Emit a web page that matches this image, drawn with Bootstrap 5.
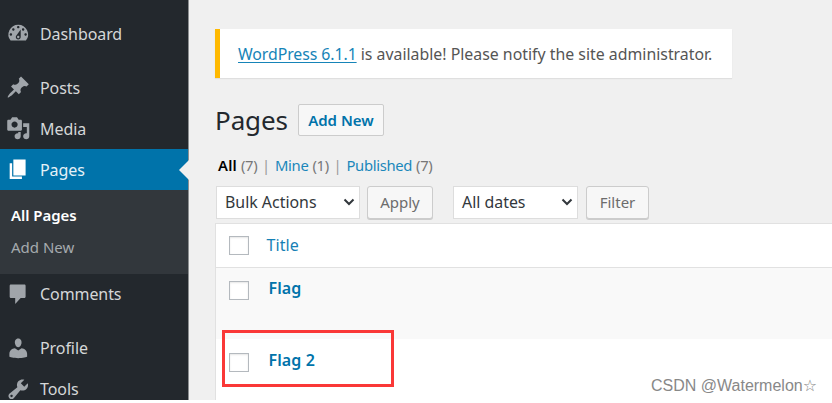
<!DOCTYPE html>
<html lang="en">
<head>
<meta charset="utf-8">
<meta name="viewport" content="width=device-width, initial-scale=1">
<title>Pages</title>
<link href="https://cdn.jsdelivr.net/npm/bootstrap@5.3.0/dist/css/bootstrap.min.css" rel="stylesheet">
<style>
body{font-family:"Noto Sans","Open Sans",sans-serif;font-size:15px;line-height:20px;color:#555;background:#fff;overflow:hidden;white-space:nowrap}
a{color:#0073aa;text-decoration:none}
.wp-app{height:400px;background:#f0f0f0}
.side{width:189px;background:#23282d;border-right:1px solid #8c8f91;padding-top:13px}
.side-item{height:41px;padding-left:6px;gap:9.5px;color:#d5d7d8;font-size:16px;letter-spacing:-.08px}
.sub ~ .side-item span{margin-top:-1px}
.side-item span{margin-top:1px}
.side-item svg{width:24.5px;height:24.5px;fill:#a0a5aa;flex:none}
.gap-top{margin-top:13px}
.side-item.current{background:#0073aa;color:#e5f1f7}
.side-item.current svg{fill:#fff}
.side-item.current::after{content:"";position:absolute;right:-1px;top:11px;border:10px solid transparent;border-left:0;border-right-color:#f0f0f0}
.sub{height:84px;background:#32373c;padding:9px 0 0 11px;color:#a5aaae}
.sub div{height:32px;line-height:32px}
.sub .on{color:#fff;font-weight:600;letter-spacing:-.05px}
.main{padding:29px 0 0 26px}
.notice-box{width:517px;height:49px;border-left:5px solid #ffb900;padding-left:18px;margin-bottom:25px;font-size:15.87px;box-shadow:0 1px 1px rgba(0,0,0,.07)}
.notice-box a{text-decoration:underline;text-underline-offset:2px;text-decoration-thickness:1.3px;color:#1684b8;letter-spacing:-.08px}
.page-title{font-size:26px;line-height:34px;font-weight:400;color:#23282d;margin:0 10px 0 0;letter-spacing:-.1px}
.add-btn{width:86px;height:32px;border:1.5px solid #ccc;border-radius:2px;background:#f7f7f7;color:#0073aa;font-weight:600;font-size:15px}
.views{margin:18px 0 11px 3px;height:20px;font-size:14.8px;letter-spacing:-.32px;gap:4px}
.views a{color:#1b87bb}
.views a.on{color:#000;font-weight:600;letter-spacing:.2px}
.views .n{color:#777}
.views i{font-style:normal;color:#999;margin:0 1px 0 .8px}
.tools-row{padding-left:1px}
.pick{height:33px;border:1px solid #ddd;background:#fff;color:#32373c;font-size:15.9px;padding:0 4px 1px 8px}
.pick svg{width:12px;height:8px;fill:none;stroke:#32373c;stroke-width:2}
.pick.w1{width:144px}.pick.w2{width:125px;margin-left:20px}
.act{height:33px;border:1px solid #ccc;border-radius:3px;background:#f7f7f7;color:#6c6c6c;font-size:15px;box-shadow:0 1px 0 #ccc}
.act.a1{width:66px;margin-left:7px}.act.a2{width:63px;margin-left:8px}
.list{margin-top:3.5px;border:1px solid #e1e1e1;border-right:0;height:200px;background:#fff}
.line{padding-left:13px}
.line.head{height:44px;border-bottom:1px solid #e1e1e1;padding-top:12px}
.line.one{height:71px;background:#f9f9f9;padding-top:13px}
.line.two{padding-top:14px}
.box{width:19.5px;height:19.5px;border:1.5px solid #b4b9be;background:#fff;box-shadow:inset 0 1px 2px rgba(0,0,0,.1);flex:none}
.line a{font-size:16px;margin-left:20px;margin-top:-2.5px;font-weight:600;letter-spacing:.1px}
.line.head a{font-weight:400;margin-left:18px;margin-top:-1px;color:#1680b5}
.redbox{position:absolute;left:222px;top:330px;width:172px;height:57px;border:3px solid #fa3837}
.stamp{position:absolute;left:651px;top:376px;font:16px/20px "Liberation Sans","DejaVu Sans",sans-serif;color:#888;text-shadow:-1px -1px 0 #fff}
</style>
</head>
<body>
<div class="wp-app d-flex position-relative overflow-hidden">
<nav class="side flex-shrink-0">
<div class="side-item d-flex align-items-center"><svg viewBox="0 0 20 20"><path fill-rule="evenodd" d="M3.76 16h12.48A7.998 7.998 0 0 0 10 3a7.998 7.998 0 0 0-6.24 13zM10 4c.55 0 1 .45 1 1s-.45 1-1 1-1-.45-1-1 .45-1 1-1zM6 6c.55 0 1 .45 1 1s-.45 1-1 1-1-.45-1-1 .45-1 1-1zm8 0c.55 0 1 .45 1 1s-.45 1-1 1-1-.45-1-1 .45-1 1-1zm-5.37 5.55L12 7v6c0 1.1-.9 2-2 2s-2-.9-2-2c0-.57.24-1.08.63-1.45zM4 10c.55 0 1 .45 1 1s-.45 1-1 1-1-.45-1-1 .45-1 1-1zm12 0c.55 0 1 .45 1 1s-.45 1-1 1-1-.45-1-1 .45-1 1-1zm-5 3c0-.55-.45-1-1-1s-1 .45-1 1 .45 1 1 1 1-.45 1-1z"/></svg><span>Dashboard</span></div>
<div class="side-item gap-top d-flex align-items-center"><svg viewBox="0 0 20 20"><path d="M10.44 3.02l1.82-1.82 6.36 6.35-1.83 1.82c-1.05-.68-2.48-.57-3.41.36l-.75.75c-.92.93-1.04 2.35-.35 3.41l-1.83 1.82-2.41-2.41-2.8 2.79c-.42.42-3.38 2.71-3.8 2.29s1.86-3.39 2.28-3.81l2.79-2.79L4.1 9.36l1.83-1.82c1.05.69 2.48.57 3.4-.36l.75-.75c.93-.92 1.05-2.35.36-3.41z"/></svg><span>Posts</span></div>
<div class="side-item d-flex align-items-center"><svg viewBox="0 0 20 20"><path fill-rule="evenodd" d="M13 11V4c0-.55-.45-1-1-1h-1.67L9 1H5L3.67 3H2c-.55 0-1 .45-1 1v7c0 .55.45 1 1 1h10c.55 0 1-.45 1-1zM7 4.5c1.38 0 2.5 1.12 2.5 2.5S8.38 9.5 7 9.5 4.5 8.38 4.5 7 5.62 4.5 7 4.5zM14 6h5v10.5c0 1.38-1.12 2.5-2.5 2.5S14 17.88 14 16.5s1.12-2.5 2.5-2.5c.17 0 .34.02.5.05V9h-3V6zm-4 8.05V13h2v3.5c0 1.38-1.12 2.5-2.5 2.5S7 17.88 7 16.5 8.12 14 9.5 14c.17 0 .34.02.5.05z"/></svg><span>Media</span></div>
<div class="side-item current position-relative d-flex align-items-center"><svg viewBox="0 0 20 20"><path d="M6 15V2h10v13H6zm-1 1h8v2H3V5h2v11z"/></svg><span>Pages</span></div>
<div class="sub"><div class="on">All Pages</div><div>Add New</div></div>
<div class="side-item d-flex align-items-center"><svg viewBox="0 0 20 20"><path d="M4 2h11c.55 0 1 .45 1 1v9c0 .55-.45 1-1 1h-3l-4.500 5v-5H4c-.55 0-1-.45-1-1V3c0-.55.45-1 1-1z"/></svg><span>Comments</span></div>
<div class="side-item gap-top d-flex align-items-center"><svg viewBox="0 0 20 20"><path d="M10 9.25c-2.27 0-2.73-3.44-2.73-3.44C7 4.02 7.82 2 9.97 2c2.16 0 2.98 2.02 2.71 3.81 0 0-.41 3.44-2.68 3.44zM7.28 10L10 11.82 12.72 10c2.39 0 4.52 2.33 4.52 4.53v2.49s-3.65 1.13-7.24 1.13c-3.65 0-7.24-1.13-7.24-1.13v-2.49C2.76 12.28 4.75 10 7.28 10z"/></svg><span>Profile</span></div>
<div class="side-item d-flex align-items-center"><svg viewBox="0 0 20 20"><path fill-rule="evenodd" d="M16.68 9.77c-1.34 1.34-3.3 1.67-4.95.99l-5.41 6.52c-.99.99-2.59.99-3.58 0s-.99-2.59 0-3.57l6.52-5.42c-.68-1.65-.35-3.61.99-4.95 1.28-1.28 3.12-1.62 4.72-1.06l-2.89 2.89 2.82 2.82 2.86-2.87c.53 1.58.18 3.39-1.08 4.65zM3.81 16.21c.4.39 1.04.39 1.43 0 .4-.4.4-1.04 0-1.43-.39-.4-1.03-.4-1.43 0-.39.39-.39 1.03 0 1.43z"/></svg><span>Tools</span></div>
</nav>
<main class="main flex-grow-1">
<div class="notice-box bg-white d-flex align-items-center"><span><a href="#">WordPress 6.1.1</a> is available! Please notify the site administrator.</span></div>
<div class="d-flex align-items-center"><h1 class="page-title">Pages</h1><a href="#" class="btn add-btn p-0 d-flex align-items-center justify-content-center">Add New</a></div>
<div class="views d-flex"><a href="#" class="on">All</a><span class="n">(7)</span><i>|</i><a href="#">Mine</a><span class="n">(1)</span><i>|</i><a href="#">Published</a><span class="n">(7)</span></div>
<div class="tools-row d-flex">
<div class="pick w1 d-flex align-items-center justify-content-between">Bulk Actions<svg viewBox="0 0 12 8"><path d="M1.5 1.5 6 6l4.5-4.5"/></svg></div>
<button class="btn act a1 p-0">Apply</button>
<div class="pick w2 d-flex align-items-center justify-content-between">All dates<svg viewBox="0 0 12 8"><path d="M1.5 1.5 6 6l4.5-4.5"/></svg></div>
<button class="btn act a2 p-0">Filter</button>
</div>
<div class="list">
<div class="line head d-flex align-items-start"><span class="box"></span><a href="#">Title</a></div>
<div class="line one d-flex align-items-start"><span class="box"></span><a href="#">Flag</a></div>
<div class="line two d-flex align-items-start"><span class="box"></span><a href="#">Flag 2</a></div>
</div>
</main>
<div class="redbox"></div>
<div class="stamp">CSDN @Watermelon☆</div>
</div>
</body>
</html>
